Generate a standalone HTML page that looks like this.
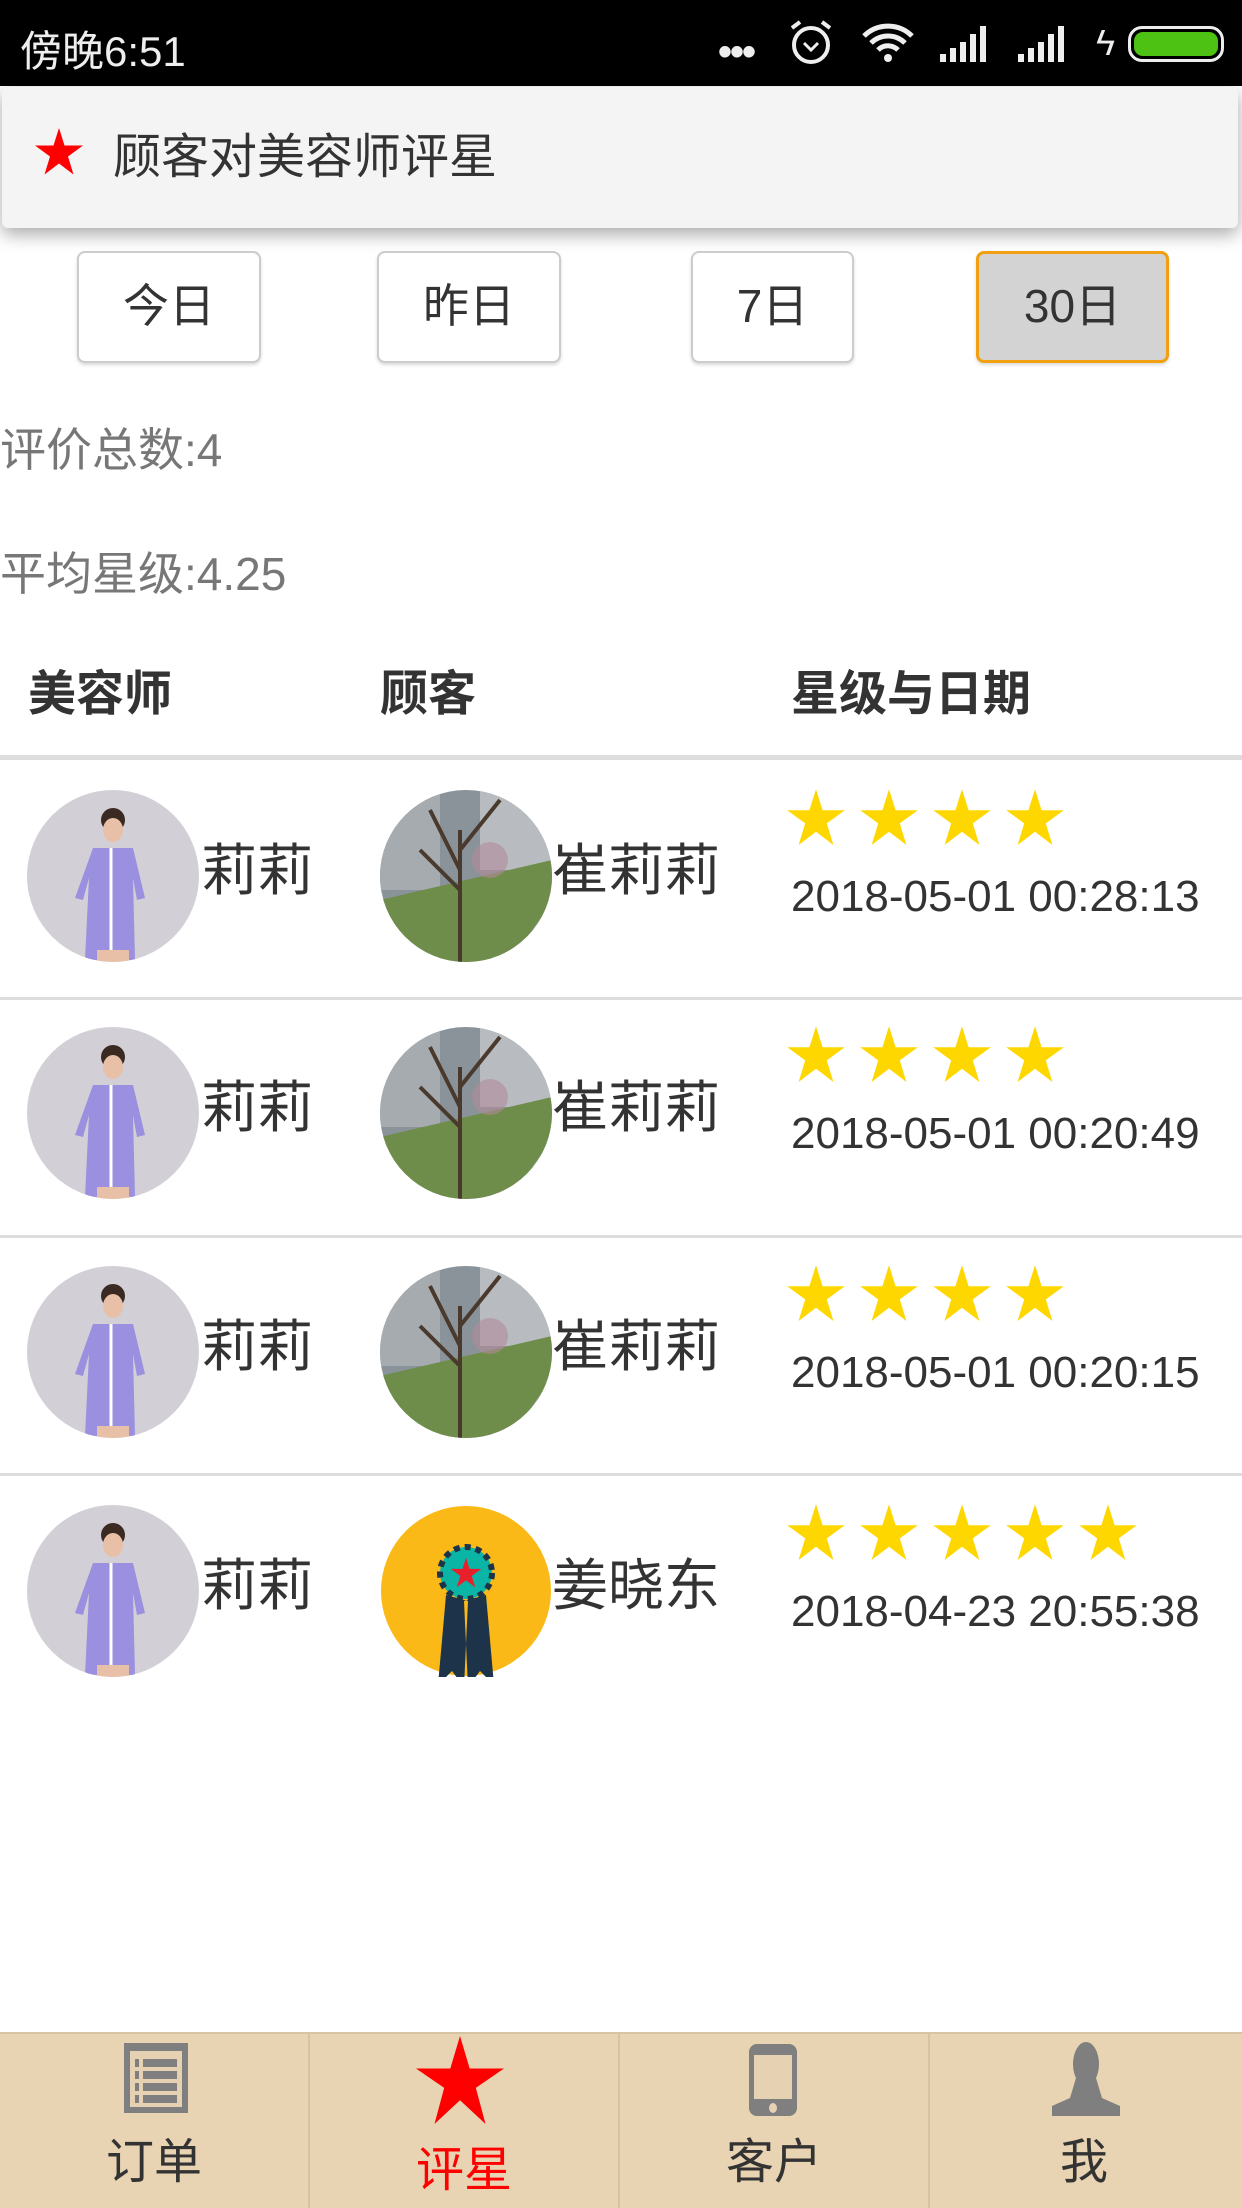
<!DOCTYPE html>
<html><head><meta charset="utf-8"><style>
*{margin:0;padding:0;box-sizing:border-box}
body{width:1242px;height:2208px;position:relative;background:#fff;font-family:"Liberation Sans","Noto Sans CJK SC",sans-serif;overflow:hidden}
.a{position:absolute}
.sb{left:0;top:0;width:1242px;height:86px;background:#000;color:#eee}
.hdr{left:2px;top:87px;width:1236px;height:141px;background:#f4f4f4;border-radius:6px;box-shadow:0 6px 18px rgba(0,0,0,.35)}
.btn{top:251px;height:112px;border:2px solid #ccc;border-radius:8px;background:#fff;font-size:46px;color:#333;display:flex;align-items:center;justify-content:center;padding-bottom:8px;box-shadow:0 2px 3px rgba(0,0,0,.15)}
.t{font-size:46px;color:#777}
.th{font-size:48px;font-weight:bold;color:#333;top:654px}
.line{left:0;width:1242px;height:3px;background:#ddd}
.av{width:172px;height:172px;border-radius:50%;overflow:hidden}
.nm{font-size:56px;color:#333}
.dt{font-size:44px;color:#333}
.tab{top:2032px;height:176px;background:#e8d3b2;border-top:2px solid #d5c3a3}
.tl{font-size:48px;color:#333;width:308px;text-align:center;top:2122px}
</style></head><body>
<div class="a sb">
<div class="a" style="left:20px;top:18px;font-size:42px;color:#eee">傍晚6:51</div>
<div class="a" style="left:718px;top:30px;font-size:40px;font-weight:bold;letter-spacing:-2px">•••</div>
<svg class="a" style="left:786px;top:18px" width="50" height="50" viewBox="0 0 50 50"><circle cx="25" cy="27" r="17" fill="none" stroke="#eee" stroke-width="4"/><path d="M18 25l7 7 7-7" fill="none" stroke="#eee" stroke-width="3"/><path d="M6 10l8-6M44 10l-8-6" stroke="#eee" stroke-width="4"/></svg>
<svg class="a" style="left:860px;top:20px" width="56" height="44" viewBox="0 0 56 44"><path d="M4 16a34 34 0 0 1 48 0M11 23a24 24 0 0 1 34 0M18 30a14 14 0 0 1 20 0" fill="none" stroke="#eee" stroke-width="5"/><circle cx="28" cy="38" r="4" fill="#eee"/></svg>
<svg class="a" style="left:938px;top:22px" width="56" height="42"><path d="M2 40h6V32h-6zM12 40h6V26h-6zM22 40h6V20h-6zM32 40h6V12h-6zM42 40h6V4h-6z" fill="#eee"/></svg>
<svg class="a" style="left:1016px;top:22px" width="56" height="42"><path d="M2 40h6V32h-6zM12 40h6V26h-6zM22 40h6V20h-6zM32 40h6V12h-6zM42 40h6V4h-6z" fill="#eee"/></svg>
<div class="a" style="left:1096px;top:22px;font-size:36px">ϟ</div>
<div class="a" style="left:1128px;top:26px;width:96px;height:36px;border:3px solid #eee;border-radius:14px;padding:3px"><div style="width:100%;height:100%;background:#4ec213;border-radius:9px"></div></div>
</div>
<div class="a hdr">
<svg class="a" style="left:32px;top:40px" width="50" height="50" viewBox="0 0 100 100"><polygon points="50,2 61,37 98,37 68,59 79,95 50,73 21,95 32,59 2,37 39,37" fill="#f00"/></svg>
<div class="a" style="left:111px;top:30px;font-size:48px;color:#333">顾客对美容师评星</div>
</div>
<div class="a btn" style="left:77px;width:184px">今日</div>
<div class="a btn" style="left:377px;width:184px">昨日</div>
<div class="a btn" style="left:691px;width:163px">7日</div>
<div class="a btn" style="left:976px;width:193px;background:#d3d3d3;border:3px solid #f0a010">30日</div>
<div class="a t" style="left:0;top:414px">评价总数:4</div>
<div class="a t" style="left:0;top:538px">平均星级:4.25</div>
<div class="a th" style="left:28px">美容师</div>
<div class="a th" style="left:380px">顾客</div>
<div class="a th" style="left:791px">星级与日期</div>
<div class="a line" style="top:755px;height:5px"></div>

<svg width="0" height="0" style="position:absolute"><defs>
<symbol id="st" viewBox="0 0 100 100"><polygon points="50,2 61,37 98,37 68,59 79,95 50,73 21,95 32,59 2,37 39,37" fill="#ffd700"/></symbol>
<symbol id="bt" viewBox="0 0 172 172"><rect width="172" height="172" fill="#d2d0d6"/><circle cx="86" cy="30" r="12" fill="#3a2a22"/><ellipse cx="86" cy="40" rx="10" ry="12" fill="#e8c0a8"/><path d="M66 58h40l12 50-8 2-4-22 2 82H58l4-82-6 22-8-2z" fill="#9b8fe0"/><path d="M84 58v102" stroke="#fff" stroke-width="3"/><rect x="70" y="160" width="32" height="12" fill="#e8c0a8"/></symbol>
<symbol id="tr" viewBox="0 0 172 172"><rect width="172" height="172" fill="#8a939a"/><rect x="0" y="0" width="60" height="100" fill="#a6abb0"/><rect x="100" y="0" width="72" height="80" fill="#b8bcc0"/><path d="M0 110L172 70V172H0z" fill="#6f8d4a"/><path d="M130 172l42-60v60z" fill="#aab0b4"/><path d="M80 172V40M80 80L50 20M80 60l40-50M80 100l-40-40" stroke="#4a3a2e" stroke-width="4" fill="none"/><circle cx="110" cy="70" r="18" fill="#b08a9a" opacity=".6"/></symbol>
</defs></svg>

<div class="a" style="left:0;top:760px;width:1242px;height:239px">
<svg class="a av" style="left:27px;top:30px"><use href="#bt"/></svg>
<div class="a nm" style="left:201px;top:66px">莉莉</div>
<svg class="a av" style="left:380px;top:30px"><use href="#tr"/></svg>
<div class="a nm" style="left:552px;top:66px">崔莉莉</div>
<svg class="a" style="left:786px;top:28px" width="300" height="62"><use href="#st" x="0" width="60" height="60"/><use href="#st" x="73" width="60" height="60"/><use href="#st" x="146" width="60" height="60"/><use href="#st" x="219" width="60" height="60"/></svg>
<div class="a dt" style="left:791px;top:112px">2018-05-01 00:28:13</div>
</div>
<div class="a line" style="top:997px"></div>
<div class="a" style="left:0;top:999px;width:1242px;height:239px">
<svg class="a av" style="left:27px;top:28px"><use href="#bt"/></svg>
<div class="a nm" style="left:201px;top:64px">莉莉</div>
<svg class="a av" style="left:380px;top:28px"><use href="#tr"/></svg>
<div class="a nm" style="left:552px;top:64px">崔莉莉</div>
<svg class="a" style="left:786px;top:26px" width="300" height="62"><use href="#st" x="0" width="60" height="60"/><use href="#st" x="73" width="60" height="60"/><use href="#st" x="146" width="60" height="60"/><use href="#st" x="219" width="60" height="60"/></svg>
<div class="a dt" style="left:791px;top:110px">2018-05-01 00:20:49</div>
</div>
<div class="a line" style="top:1235px"></div>
<div class="a" style="left:0;top:1237px;width:1242px;height:239px">
<svg class="a av" style="left:27px;top:29px"><use href="#bt"/></svg>
<div class="a nm" style="left:201px;top:65px">莉莉</div>
<svg class="a av" style="left:380px;top:29px"><use href="#tr"/></svg>
<div class="a nm" style="left:552px;top:65px">崔莉莉</div>
<svg class="a" style="left:786px;top:27px" width="300" height="62"><use href="#st" x="0" width="60" height="60"/><use href="#st" x="73" width="60" height="60"/><use href="#st" x="146" width="60" height="60"/><use href="#st" x="219" width="60" height="60"/></svg>
<div class="a dt" style="left:791px;top:111px">2018-05-01 00:20:15</div>
</div>
<div class="a line" style="top:1473px"></div>
<div class="a" style="left:0;top:1475px;width:1242px;height:239px">
<svg class="a av" style="left:27px;top:30px"><use href="#bt"/></svg>
<div class="a nm" style="left:201px;top:66px">莉莉</div>
<svg class="a" style="left:380px;top:30px" width="172" height="172" viewBox="0 0 172 172"><circle cx="86" cy="86" r="85" fill="#fbb917"/><path d="M66 90l-8 90 14-14 12 16 4-86zM106 90l8 90-14-14-12 16-4-86z" fill="#1c3349"/><circle cx="86" cy="68" r="26" fill="#0bb5a6" stroke="#1c3349" stroke-width="6" stroke-dasharray="6 5"/><polygon transform="translate(70 52) scale(.32)" points="50,2 61,37 98,37 68,59 79,95 50,73 21,95 32,59 2,37 39,37" fill="#e8202c"/></svg>
<div class="a nm" style="left:552px;top:66px">姜晓东</div>
<svg class="a" style="left:786px;top:28px" width="380" height="62"><use href="#st" x="0" width="60" height="60"/><use href="#st" x="73" width="60" height="60"/><use href="#st" x="146" width="60" height="60"/><use href="#st" x="219" width="60" height="60"/><use href="#st" x="292" width="60" height="60"/></svg>
<div class="a dt" style="left:791px;top:112px">2018-04-23 20:55:38</div>
</div>

<div class="a tab" style="left:0;width:1242px"></div>
<div class="a" style="left:308px;top:2034px;width:2px;height:174px;background:#d5c3a3"></div>
<div class="a" style="left:618px;top:2034px;width:2px;height:174px;background:#d5c3a3"></div>
<div class="a" style="left:928px;top:2034px;width:2px;height:174px;background:#d5c3a3"></div>
<svg class="a" style="left:123px;top:2042px" width="66" height="72" viewBox="0 0 66 72"><rect x="1" y="1" width="64" height="70" fill="#7f7f7f"/><rect x="7" y="9" width="52" height="56" fill="#e6d2b2"/><g fill="#7f7f7f"><rect x="12" y="17" width="4" height="8"/><rect x="20" y="17" width="34" height="8"/><rect x="12" y="29" width="4" height="8"/><rect x="20" y="29" width="34" height="8"/><rect x="12" y="41" width="4" height="8"/><rect x="20" y="41" width="34" height="8"/><rect x="12" y="53" width="4" height="8"/><rect x="20" y="53" width="34" height="8"/></g></svg>
<svg class="a" style="left:415px;top:2036px" width="90" height="88" viewBox="0 0 100 100"><polygon points="50,0 61,37 100,37 68,59 79,100 50,73 21,100 32,59 0,37 39,37" fill="#f00"/></svg>
<svg class="a" style="left:748px;top:2043px" width="50" height="74" viewBox="0 0 50 74"><rect x="1" y="1" width="48" height="72" rx="8" fill="#7f7f7f"/><rect x="6" y="12" width="38" height="44" fill="#e6d2b2"/><ellipse cx="25" cy="65" rx="4" ry="5" fill="#e6d2b2"/></svg>
<svg class="a" style="left:1050px;top:2042px" width="72" height="74" viewBox="0 0 72 74"><ellipse cx="36" cy="22" rx="13" ry="22" fill="#7f7f7f"/><path d="M26 36h20l6 20 18 8v10H2V64l18-8z" fill="#7f7f7f"/></svg>
<div class="a tl" style="left:0">订单</div>
<div class="a tl" style="left:310px;color:#f00;top:2130px">评星</div>
<div class="a tl" style="left:620px">客户</div>
<div class="a tl" style="left:930px">我</div>
</body></html>
